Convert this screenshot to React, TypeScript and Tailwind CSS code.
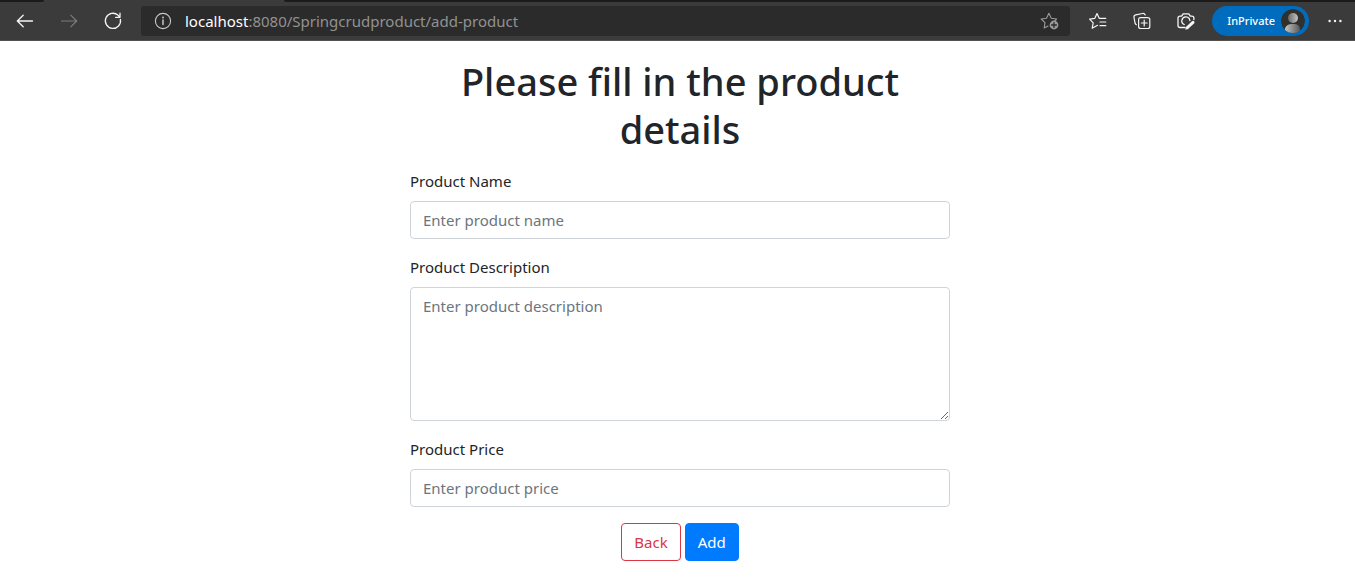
import type { ReactNode } from "react";

function ToolButton({
  label,
  children,
  width = "w-11",
  color = "text-[#f5f5f5]",
}: {
  label: string;
  children: ReactNode;
  width?: string;
  color?: string;
}) {
  return (
    <button type="button" aria-label={label} className={`flex h-8 shrink-0 items-center justify-center ${width} ${color}`}>
      {children}
    </button>
  );
}

const icon = {
  width: 20,
  height: 20,
  viewBox: "0 0 20 20",
  fill: "none",
  stroke: "currentColor",
  strokeWidth: 1.1,
  strokeLinecap: "round" as const,
  strokeLinejoin: "round" as const,
  "aria-hidden": true,
};

function BrowserBar() {
  return (
    <header className="bg-[#3b3b3b] font-['Noto_Sans','Open_Sans',sans-serif]">
      <div className="flex h-0.5 gap-60">
        <div className="w-11 rounded-br-sm bg-[#1b1b1b]" />
        <div className="flex-1 rounded-bl-sm bg-[#1b1b1b]" />
      </div>
      <div className="flex h-[39px] items-center border-b border-[#515151] pl-[3px]">
        <ToolButton label="Back">
          <svg {...icon} strokeWidth={1.3}><path d="M17.5 10H2.5M8.2 4.2L2.3 10L8.2 15.8" /></svg>
        </ToolButton>
        <ToolButton label="Forward" color="text-[#7d7d7d]">
          <svg {...icon}><path d="M2.5 10H17.5M11.8 4.2L17.7 10L11.8 15.8" /></svg>
        </ToolButton>
        <ToolButton label="Refresh">
          <svg {...icon} strokeWidth={1.3}><path d="M17.4 8.4A7.6 7.6 0 1 1 14.9 4.1L17 6.2M17 2.2V6.3H12.6" /></svg>
        </ToolButton>
        <div className="ml-1.5 mr-1.5 flex h-[30px] min-w-0 flex-1 items-center rounded-[3px] bg-[#2b2b2b] pl-3">
          <svg {...icon} stroke="#c8c8c8" className="shrink-0">
            <circle cx="10" cy="10" r="7.6" />
            <path d="M10 9V13.6" strokeWidth="1.5" />
            <circle cx="10" cy="6.5" r="0.4" fill="#c8c8c8" />
          </svg>
          <div className="ml-3 flex-1 truncate text-[15px] leading-6 text-[#929292]">
            <span className="text-white">localhost</span>:8080/Springcrudproduct/add-product
          </div>
          <button type="button" aria-label="Add this page to favorites" className="flex h-8 w-10 items-center justify-center text-[#9a9a9a]">
            <svg {...icon}>
              <path d="M8 15L4.2 17L5 11.7L1.2 8L6.5 7.2L8.9 2.3L11.3 7.2L16.6 8L14.8 9.8" />
              <circle cx="14" cy="14" r="4.4" fill="currentColor" stroke="none" />
              <path d="M14 11.6V16.4M11.6 14H16.4" stroke="#2b2b2b" strokeWidth="1.3" />
            </svg>
          </button>
        </div>
        <ToolButton label="Favorites">
          <svg {...icon} strokeWidth={1.2}>
            <path d="M9.5 14.3L4.2 17.2L5.2 11.8L1.6 8.1L6.8 7.3L9 2.5L11.2 7.3H17.8M12 11H17.8M12 14.7H17.8" />
          </svg>
        </ToolButton>
        <ToolButton label="Collections">
          <svg {...icon} strokeWidth={1.2}>
            <rect x="6.6" y="6.6" width="11.2" height="10.9" rx="2" />
            <path d="M12.2 9.2V14.9M9.3 12H15.1M4.4 13.7C3.6 13.4 3.2 12.8 3 12L2 6.3C1.8 5 2.5 4.2 3.7 3.9L10.5 2.5C11.8 2.3 12.8 2.8 13.2 4" />
          </svg>
        </ToolButton>
        <ToolButton label="Web capture">
          <svg {...icon} strokeWidth={1.3}>
            <path d="M9 16.5H4.2C2.8 16.5 2 15.7 2 14.4V7.2C2 5.9 2.8 5.1 4.1 5.1H5.6L7.1 2.8H12.8L14.3 5.1H15.8C17.1 5.1 17.9 5.9 17.9 7.2V8.5" />
            <path d="M8.2 13.5A4 4 0 1 1 13.8 9.5" />
            <path d="M11.5 16.5L17 11.3" strokeWidth="3" />
            <path d="M9.7 18L10.2 15.8L12 17.4Z" fill="currentColor" strokeWidth="0.6" />
          </svg>
        </ToolButton>
        <button type="button" className="ml-1 mr-1.5 flex h-[30px] shrink-0 items-center gap-1.5 rounded-full bg-[#006cbe] pl-[15px] pr-1 text-[11px] font-medium text-white">
          InPrivate
          <svg width="24" height="24" viewBox="0 0 24 24" aria-hidden="true">
            <defs>
              <linearGradient id="head"><stop stopColor="#686868" /><stop offset="1" stopColor="#c4c4c4" /></linearGradient>
              <linearGradient id="torso"><stop stopColor="#c4c4c4" /><stop offset="1" stopColor="#585858" /></linearGradient>
              <clipPath id="disc"><circle cx="12" cy="12" r="12" /></clipPath>
            </defs>
            <g clipPath="url(#disc)">
              <circle cx="12" cy="12" r="12" fill="#30302f" />
              <circle cx="12" cy="9" r="5" fill="url(#head)" />
              <path d="M4 24V20.5C4 17 7 15 12 15S19 17 19 20.5V24Z" fill="url(#torso)" />
            </g>
          </svg>
        </button>
        <ToolButton label="Settings and more" width="w-10">
          <svg {...icon} fill="currentColor" stroke="none">
            <circle cx="4.6" cy="10" r="1.2" /><circle cx="10" cy="10" r="1.2" /><circle cx="15.4" cy="10" r="1.2" />
          </svg>
        </ToolButton>
      </div>
    </header>
  );
}

function Field({ id, label, children }: { id: string; label: string; children: ReactNode }) {
  return (
    <div className="mb-4">
      <label htmlFor={id} className="mb-2 block">{label}</label>
      {children}
    </div>
  );
}

export default function App() {
  return (
    <div className="min-h-screen bg-white">
      <BrowserBar />
      <main className="py-4 pl-[5px] font-['Noto_Sans','Open_Sans',sans-serif] text-[15px] leading-6 text-[#212529]">
        <div className="mx-auto max-w-[540px]">
          <h1 className="mb-4 text-center text-[38px] leading-[48px] font-medium [font-variant-ligatures:none]">Please fill in the product details</h1>
          <form>
            <Field id="name" label="Product Name">
              <input id="name" type="text" placeholder="Enter product name" className="block h-[38px] w-full rounded border border-[#ced4da] px-3 placeholder:text-[#6c757d]" />
            </Field>
            <Field id="description" label="Product Description">
              <textarea id="description" rows={5} placeholder="Enter product description" className="block w-full resize rounded border border-[#ced4da] px-3 py-1.5 placeholder:text-[#6c757d]" />
            </Field>
            <Field id="price" label="Product Price">
              <input id="price" type="text" placeholder="Enter product price" className="block h-[38px] w-full rounded border border-[#ced4da] px-3 placeholder:text-[#6c757d]" />
            </Field>
            <div className="flex justify-center gap-1">
              <a href="#" className="rounded border border-[#dc3545] px-3 py-1.5 text-[#dc3545]">Back</a>
              <button type="submit" className="rounded border border-[#007bff] bg-[#007bff] px-3 py-1.5 text-white">Add</button>
            </div>
          </form>
        </div>
      </main>
    </div>
  );
}
